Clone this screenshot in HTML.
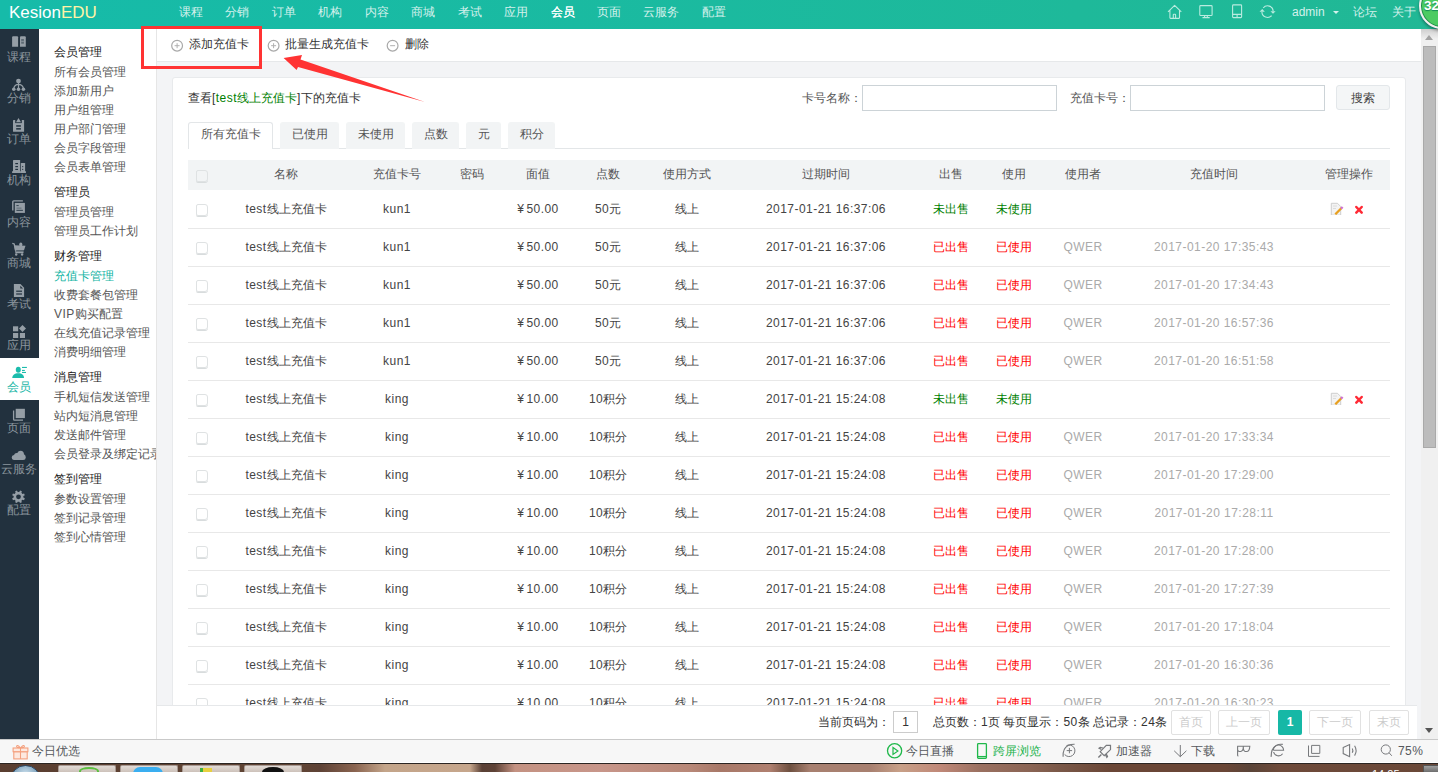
<!DOCTYPE html><html><head><meta charset="utf-8"><style>
*{margin:0;padding:0;box-sizing:border-box}
html,body{width:1438px;height:772px;overflow:hidden;background:#fff;font-family:"Liberation Sans",sans-serif;font-size:12px;color:#444;position:relative}
.a{position:absolute;white-space:nowrap}
.c{position:absolute;width:200px;text-align:center;white-space:nowrap;line-height:14px}
#top{left:0;top:0;width:1438px;height:29px;background:linear-gradient(90deg,#16bba9 0%,#1bba9f 50%,#21b895 100%)}
#logo{left:9px;top:3px;font-size:17px;color:#fff;line-height:20px}
#logo span{color:#fff3a6}
.nav{top:5px;color:#d4f1ec;font-size:12px;line-height:14px}
#side{left:0;top:29px;width:39px;height:710px;background:#22313e}
.si{position:absolute;left:0;width:39px;height:41px;text-align:center;color:#8b959d}
.si .lb{position:absolute;left:-10.7px;width:59px;text-align:center;top:20.5px;font-size:12px;line-height:14px}
.si svg{position:absolute;left:13px;top:7px}
.si.on{background:#fff;color:#17b6a6;margin-top:-1px;height:42px}
.si.on .lb{top:21.5px}
#sub{left:39px;top:29px;width:118px;height:710px;background:#fff;border-right:1px solid #e6e6e6;overflow:hidden}
.mh{position:absolute;left:15px;color:#222;font-size:12px;line-height:14px}
.mi{position:absolute;left:15px;color:#555;font-size:12px;line-height:14px}
#main{left:157px;top:29px;width:1264px;height:710px;background:#f3f4f6;overflow:hidden}
#tool{left:157px;top:29px;width:1264px;height:33px;background:#fff;border-bottom:1px solid #e6e8ea}
#panel{left:172px;top:77px;width:1234px;height:700px;background:#fff;border:1px solid #e8eaec;border-radius:3px}
.tab{position:absolute;top:122px;height:27px;background:#f2f4f5;border:1px solid #f2f4f5;border-bottom:none;border-radius:3px 3px 0 0;text-align:center;line-height:23px;color:#555}
.tab.on{background:#fff;border-color:#e3e6e8}
#tabline{left:188px;top:148px;width:1202px;height:1px;background:#e3e6e8}
#thead{left:188px;top:160px;width:1202px;height:30px;background:#f2f4f5}
.rl{position:absolute;left:188px;width:1202px;height:1px;background:#e8e8e8}
.cb{position:absolute;left:196px;width:12px;height:12px;border:1px solid #dfe2e3;border-radius:2px 3px 3px 2px;background:transparent;box-shadow:0 1px 0 #d8dcdd}
.l{letter-spacing:0.45px}.y{margin-right:2.5px}
.g{color:#008000}.r{color:#f00}.q{color:#aaa}
#pager{left:157px;top:705px;width:1260px;height:34px;background:#fff;border-top:1px solid #e6e8ea}
.pb{position:absolute;top:710px;height:25px;border:1px solid #e1e1e1;border-radius:2px;color:#ccc;text-align:center;line-height:23px;background:#fff}
#sbar{left:1421px;top:29px;width:17px;height:710px;background:#f0f0f0}
#status{left:0;top:739px;width:1438px;height:24px;background:#f7f7f7;border-top:1px solid #c9c9c9;border-bottom:1px solid #fff}
#task{left:0;top:763px;width:1438px;height:9px;border-top:1px solid #2b2522;background:linear-gradient(90deg,#5a3e30 0px,#604434 300px,#5e4236 320px,#8a6450 355px,#c4a58a 385px,#c6a68c 470px,#5a4035 482px,#5e4236 495px,#c49282 515px,#c8968a 600px,#b88878 690px,#a87868 720px,#b08070 770px,#6e5040 790px,#a88070 810px,#a88070 870px,#c8a088 900px,#c08878 940px,#9a7060 980px,#8a6454 1030px,#7a5848 1060px,#6a4636 1110px,#6a4636 1225px,#5a4438 1250px,#6e4a3a 1280px,#6a4838 1423px)}
.tb{position:absolute;top:765px;height:8px;border:1px solid #a89a93;border-bottom:none;border-radius:2px 2px 0 0;background:linear-gradient(#e2dbd6,#c9bdb5)}
</style></head><body>

<div id="top" class="a"></div>
<div id="logo" class="a">Kesion<span>EDU</span></div>
<div class="c nav" style="left:91px;color:#d4f1ec">课程</div>
<div class="c nav" style="left:137px;color:#d4f1ec">分销</div>
<div class="c nav" style="left:184px;color:#d4f1ec">订单</div>
<div class="c nav" style="left:230px;color:#d4f1ec">机构</div>
<div class="c nav" style="left:277px;color:#d4f1ec">内容</div>
<div class="c nav" style="left:323px;color:#d4f1ec">商城</div>
<div class="c nav" style="left:370px;color:#d4f1ec">考试</div>
<div class="c nav" style="left:416px;color:#d4f1ec">应用</div>
<div class="c nav" style="left:463px;color:#fff;text-shadow:0.4px 0 0 #fff">会员</div>
<div class="c nav" style="left:509px;color:#d4f1ec">页面</div>
<div class="c nav" style="left:561px;color:#d4f1ec">云服务</div>
<div class="c nav" style="left:614px;color:#d4f1ec">配置</div>
<svg class="a" style="left:1160px;top:0" width="125" height="24" viewBox="1160 0 125 24"><g stroke="#b9ebdf" stroke-width="1.1" fill="none" stroke-linejoin="round">
<path d="M1168,11.8 L1174.6,5.3 L1181.3,11.8 M1169.9,10.3 L1169.9,17.8 Q1169.9,18.4 1170.5,18.4 L1178.9,18.4 Q1179.5,18.4 1179.5,17.8 L1179.5,10.3 M1173.3,18.2 L1173.3,14.8 Q1173.3,14.3 1173.8,14.3 L1175.1,14.3 Q1175.6,14.3 1175.6,14.8 L1175.6,18.2"/>
<rect x="1199.8" y="5.6" width="12.3" height="9.9" rx="0.8"/>
<path d="M1202.5,17.6 L1209.7,17.6 M1204.6,15.5 L1204.6,17.5 M1207.3,15.5 L1207.3,17.5"/>
<rect x="1232.6" y="4.9" width="9" height="12.7" rx="0.8"/>
<path d="M1232.6,14.4 L1241.6,14.4 M1237.1,14.4 L1237.1,17.6"/>
<path d="M1263.2,8 A5.6,5.6 0 0 1 1273.2,11.3 M1271.6,15.6 A5.6,5.6 0 0 1 1261.9,12"/>
</g><g fill="#b9ebdf"><polygon points="1259.5,11.8 1262.3,9 1264.8,11.8"/><polygon points="1270.5,11.2 1275.6,11.2 1273,13.8"/></g></svg>
<div class="a nav" style="left:1292px">admin</div>
<div class="a" style="left:1333px;top:11px;width:0;height:0;border-left:3px solid transparent;border-right:3px solid transparent;border-top:3px solid #d4f1ec"></div>
<div class="a nav" style="left:1353px">论坛</div>
<div class="a nav" style="left:1392px">关于</div>
<div id="side" class="a"></div>
<div class="si" style="top:29.00px"><div class="lb">课程</div></div>
<div class="si" style="top:70.25px"><div class="lb">分销</div></div>
<div class="si" style="top:111.50px"><div class="lb">订单</div></div>
<div class="si" style="top:152.75px"><div class="lb">机构</div></div>
<div class="si" style="top:194.00px"><div class="lb">内容</div></div>
<div class="si" style="top:235.25px"><div class="lb">商城</div></div>
<div class="si" style="top:276.50px"><div class="lb">考试</div></div>
<div class="si" style="top:317.75px"><div class="lb">应用</div></div>
<div class="si on" style="top:359.00px"><div class="lb">会员</div></div>
<div class="si" style="top:400.25px"><div class="lb">页面</div></div>
<div class="si" style="top:441.50px"><div class="lb">云服务</div></div>
<div class="si" style="top:482.75px"><div class="lb">配置</div></div>
<svg class="a" style="left:0;top:0" width="39" height="540" viewBox="0 0 39 540">
<g fill="#959ea6">
<path d="M12.1,37.2 Q12.1,36.2 13.1,36.2 L17.1,36.2 Q18.1,36.2 18.1,37.2 L18.1,46.8 L12.1,46.8 Z"/>
<path d="M20,37.2 Q20,36.2 21,36.2 L24.8,36.2 Q25.8,36.2 25.8,37.2 L25.8,46.8 L20,46.8 Z"/>
<rect x="21.2" y="39" width="2.7" height="4.7" fill="#5d6a74"/><rect x="21.2" y="40.9" width="2.7" height="0.8" fill="#959ea6"/>
<circle cx="18.5" cy="81.1" r="2.4"/>
<circle cx="13.8" cy="89.3" r="1.8"/><circle cx="18.5" cy="89.3" r="1.8"/><circle cx="23.4" cy="89.3" r="1.8"/>
<path d="M18.5,83 L18.5,88 M13.8,88.3 Q14.5,84.5 18.5,84.3 Q22.6,84.5 23.4,88.3" stroke="#959ea6" stroke-width="1.2" fill="none"/>
<rect x="13" y="120" width="11.1" height="11.8" rx="0.6"/>
<rect x="15.2" y="119.5" width="6.6" height="3.6" fill="#22313e"/>
<polygon points="16,122.3 18.5,118 21,122.3"/>
<rect x="16.2" y="125.2" width="4.7" height="1.5" fill="#22313e"/><rect x="16.2" y="128.1" width="4.7" height="1.5" fill="#22313e"/>
<rect x="13" y="160" width="7.1" height="12.9" rx="0.5"/><rect x="20.8" y="163" width="4.3" height="9.9" rx="0.5"/><rect x="12" y="171.3" width="14" height="1.6"/>
<g fill="#22313e"><rect x="15.3" y="163" width="2.7" height="1.2"/><rect x="15.3" y="166" width="2.7" height="1.2"/><rect x="15.3" y="168.8" width="2.7" height="1.2"/><rect x="22.2" y="166" width="1" height="1.2"/><rect x="22.2" y="168.8" width="1" height="1.2"/></g>
<path d="M12.8,210.4 L12.8,201.8 Q12.8,200.9 13.7,200.9 L22.9,200.9" stroke="#959ea6" stroke-width="1.4" fill="none"/>
<rect x="14.2" y="202.3" width="11.3" height="11.2" fill="#22313e"/>
<rect x="14.8" y="202.9" width="10.1" height="10"/>
<g fill="#3d4c58"><rect x="16.4" y="205" width="2.3" height="1.1"/><rect x="16.5" y="207.5" width="5" height="1.3" fill="#6b7780"/><rect x="16.4" y="209.8" width="6.5" height="1.2"/></g>
<path d="M12.3,243.3 L14.2,244 L16,252.5 L23.5,252.5" stroke="#959ea6" stroke-width="1.3" fill="none"/>
<polygon points="14,245.2 25.5,245.8 24,250.2 15,250.2"/>
<ellipse cx="20.8" cy="244.5" rx="1.6" ry="2"/>
<rect x="15.5" y="250.5" width="8" height="1.5" fill="#6b7780"/>
<circle cx="16.2" cy="254.5" r="1.2"/><circle cx="22.1" cy="254.5" r="1.2"/>
<polygon points="13.9,284.1 20.5,284.1 24.1,287.8 24.1,297 13.9,297"/>
<polygon points="20.3,285.8 20.3,288.6 23,288.6" fill="#22313e"/>
<rect x="16.2" y="290.6" width="5.8" height="1.2" fill="#22313e"/><rect x="16.2" y="293.4" width="5.8" height="1.2" fill="#22313e"/>
<rect x="13" y="326.3" width="5.2" height="5"/><rect x="13" y="333" width="5.2" height="5"/><rect x="19.9" y="333" width="5.1" height="5"/>
<polygon points="22.5,325 26,328.5 22.5,332 19,328.5"/>
<g fill="#1cbcac">
<ellipse cx="18.3" cy="369.8" rx="2.5" ry="3"/>
<path d="M12.2,377.9 C12.4,375 14.5,373.8 16.8,373.2 L19.8,373.2 C22,373.8 24,375 24.1,377.9 Z"/>
<rect x="22" y="366.9" width="4.9" height="1.1"/><rect x="22" y="369.9" width="2.8" height="1.1"/><rect x="22" y="371.9" width="4" height="1.1"/>
</g>
<rect x="15.7" y="408.8" width="9.2" height="9.3"/>
<path d="M13.6,410.5 L13.6,419.3 Q13.6,420.2 14.5,420.2 L23,420.2" stroke="#959ea6" stroke-width="1.3" fill="none"/>
<path d="M13.8,460 Q11.7,460 11.7,457.6 Q11.7,455.2 14,455 Q14.8,452.6 17.3,453 Q18.3,450.7 20.6,450.7 Q23.8,450.9 24,454.3 Q25.8,455.2 25.8,457.4 Q25.6,460 23.2,460 Z"/>
<polygon points="19.25,491.96 20.06,490.49 21.86,491.23 21.40,492.85 22.45,493.90 24.07,493.44 24.81,495.24 23.34,496.05 23.34,497.55 24.81,498.36 24.07,500.16 22.45,499.70 21.40,500.75 21.86,502.37 20.06,503.11 19.25,501.64 17.75,501.64 16.94,503.11 15.14,502.37 15.60,500.75 14.55,499.70 12.93,500.16 12.19,498.36 13.66,497.55 13.66,496.05 12.19,495.24 12.93,493.44 14.55,493.90 15.60,492.85 15.14,491.23 16.94,490.49 17.75,491.96"/>
<circle cx="18.5" cy="496.8" r="2.4" fill="#22313e"/>
</g></svg>
<div id="sub" class="a">
<div class="mh" style="top:16px;">会员管理</div>
<div class="mi" style="top:36px;">所有会员管理</div>
<div class="mi" style="top:55px;">添加新用户</div>
<div class="mi" style="top:74px;">用户组管理</div>
<div class="mi" style="top:93px;">用户部门管理</div>
<div class="mi" style="top:112px;">会员字段管理</div>
<div class="mi" style="top:131px;">会员表单管理</div>
<div class="mh" style="top:156px;">管理员</div>
<div class="mi" style="top:176px;">管理员管理</div>
<div class="mi" style="top:195px;">管理员工作计划</div>
<div class="mh" style="top:220px;">财务管理</div>
<div class="mi" style="top:240px;color:#12b4a4;">充值卡管理</div>
<div class="mi" style="top:259px;">收费套餐包管理</div>
<div class="mi" style="top:278px;"><span class="l">VIP</span>购买配置</div>
<div class="mi" style="top:297px;">在线充值记录管理</div>
<div class="mi" style="top:316px;">消费明细管理</div>
<div class="mh" style="top:341px;">消息管理</div>
<div class="mi" style="top:361px;">手机短信发送管理</div>
<div class="mi" style="top:380px;">站内短消息管理</div>
<div class="mi" style="top:399px;">发送邮件管理</div>
<div class="mi" style="top:418px;">会员登录及绑定记录</div>
<div class="mh" style="top:443px;">签到管理</div>
<div class="mi" style="top:463px;">参数设置管理</div>
<div class="mi" style="top:482px;">签到记录管理</div>
<div class="mi" style="top:501px;">签到心情管理</div>
</div>
<div id="main" class="a"></div>
<div id="tool" class="a"></div>
<div id="panel" class="a"></div>
<div class="a" style="left:188px;top:90px;color:#333">查看<span class="l">[</span><span style="color:#008000"><span class="l">test</span>线上充值卡</span><span class="l">]</span>下的充值卡</div>
<svg class="a" style="left:160px;top:30px" width="250" height="30" viewBox="160 30 250 30"><g fill="none" stroke="#a9a9a9" stroke-width="1.2">
<circle cx="177.1" cy="45.7" r="5.4"/><circle cx="273.6" cy="45.7" r="5.4"/><circle cx="392.6" cy="45.7" r="5.4"/></g>
<g stroke="#b0b0b0" stroke-width="1"><path d="M174.6,45.7 L179.6,45.7 M177.1,43.2 L177.1,48.2 M271.1,45.7 L276.1,45.7 M273.6,43.2 L273.6,48.2 M390.1,45.7 L395.1,45.7"/></g></svg>
<div class="a" style="left:189px;top:36px;color:#333">添加充值卡</div>
<div class="a" style="left:285px;top:36px;color:#333">批量生成充值卡</div>
<div class="a" style="left:405px;top:36px;color:#333">删除</div>
<div class="a" style="left:802px;top:90px;color:#555">卡号名称：</div>
<div class="a" style="left:862px;top:85px;width:195px;height:26px;border:1px solid #ccd3d7;background:#fff"></div>
<div class="a" style="left:1070px;top:90px;color:#555">充值卡号：</div>
<div class="a" style="left:1130px;top:85px;width:195px;height:26px;border:1px solid #ccd3d7;background:#fff"></div>
<div class="a" style="left:1336px;top:85px;width:54px;height:25px;border:1px solid #e3e7ea;background:#f4f6f7;border-radius:3px;text-align:center;line-height:25px;color:#444">搜索</div>
<div id="tabline" class="a"></div>
<div class="tab on" style="left:188px;width:85px">所有充值卡</div>
<div class="tab" style="left:280px;width:59px">已使用</div>
<div class="tab" style="left:346px;width:59px">未使用</div>
<div class="tab" style="left:412px;width:47px">点数</div>
<div class="tab" style="left:466px;width:35px">元</div>
<div class="tab" style="left:508px;width:47px">积分</div>
<div id="thead" class="a"></div>
<div class="cb" style="top:170px"></div>
<div class="c " style="left:186px;top:167px;color:#555">名称</div>
<div class="c " style="left:297px;top:167px;color:#555">充值卡号</div>
<div class="c " style="left:372px;top:167px;color:#555">密码</div>
<div class="c " style="left:438px;top:167px;color:#555">面值</div>
<div class="c " style="left:508px;top:167px;color:#555">点数</div>
<div class="c " style="left:587px;top:167px;color:#555">使用方式</div>
<div class="c " style="left:726px;top:167px;color:#555">过期时间</div>
<div class="c " style="left:851px;top:167px;color:#555">出售</div>
<div class="c " style="left:914px;top:167px;color:#555">使用</div>
<div class="c " style="left:983px;top:167px;color:#555">使用者</div>
<div class="c " style="left:1114px;top:167px;color:#555">充值时间</div>
<div class="c " style="left:1249px;top:167px;color:#555">管理操作</div>
<div class="cb" style="top:204px"></div>
<div class="c " style="left:186px;top:202px;"><span class="l">test</span>线上充值卡</div>
<div class="c " style="left:297px;top:202px;"><span class="l">kun1</span></div>
<div class="c " style="left:438px;top:202px;"><span class="y">¥</span><span class="l">50.00</span></div>
<div class="c " style="left:508px;top:202px;"><span class="l">50</span>元</div>
<div class="c " style="left:587px;top:202px;">线上</div>
<div class="c " style="left:726px;top:202px;"><span class="l">2017-01-21 16:37:06</span></div>
<div class="c g" style="left:851px;top:202px;">未出售</div>
<div class="c g" style="left:914px;top:202px;">未使用</div>
<svg class="a" style="left:1328px;top:199px" width="40" height="16" viewBox="0 0 40 16">
<path d="M3.3,4.3 L9.5,4.3 L12.7,7.5 L12.7,16.2 L3.3,16.2 Z" fill="#f3f3f3" stroke="#c9c9c9" stroke-width="0.9"/>
<path d="M5,7 L9,7 M5,9.5 L8,9.5" stroke="#d5d5d5" stroke-width="0.8"/>
<path d="M7.3,15.3 L13.3,9.3" stroke="#e8a020" stroke-width="2.3"/>
<path d="M13,9.6 L14.6,8" stroke="#d070d0" stroke-width="2.3"/>
<path d="M28.3,8 L33.7,13.6 M33.7,8 L28.3,13.6" stroke="#ff2a35" stroke-width="2.5" stroke-linecap="round"/>
</svg>
<div class="rl" style="top:228px"></div>
<div class="cb" style="top:242px"></div>
<div class="c " style="left:186px;top:240px;"><span class="l">test</span>线上充值卡</div>
<div class="c " style="left:297px;top:240px;"><span class="l">kun1</span></div>
<div class="c " style="left:438px;top:240px;"><span class="y">¥</span><span class="l">50.00</span></div>
<div class="c " style="left:508px;top:240px;"><span class="l">50</span>元</div>
<div class="c " style="left:587px;top:240px;">线上</div>
<div class="c " style="left:726px;top:240px;"><span class="l">2017-01-21 16:37:06</span></div>
<div class="c r" style="left:851px;top:240px;">已出售</div>
<div class="c r" style="left:914px;top:240px;">已使用</div>
<div class="c q" style="left:983px;top:240px;"><span class="l">QWER</span></div>
<div class="c q" style="left:1114px;top:240px;"><span class="l">2017-01-20 17:35:43</span></div>
<div class="rl" style="top:266px"></div>
<div class="cb" style="top:280px"></div>
<div class="c " style="left:186px;top:278px;"><span class="l">test</span>线上充值卡</div>
<div class="c " style="left:297px;top:278px;"><span class="l">kun1</span></div>
<div class="c " style="left:438px;top:278px;"><span class="y">¥</span><span class="l">50.00</span></div>
<div class="c " style="left:508px;top:278px;"><span class="l">50</span>元</div>
<div class="c " style="left:587px;top:278px;">线上</div>
<div class="c " style="left:726px;top:278px;"><span class="l">2017-01-21 16:37:06</span></div>
<div class="c r" style="left:851px;top:278px;">已出售</div>
<div class="c r" style="left:914px;top:278px;">已使用</div>
<div class="c q" style="left:983px;top:278px;"><span class="l">QWER</span></div>
<div class="c q" style="left:1114px;top:278px;"><span class="l">2017-01-20 17:34:43</span></div>
<div class="rl" style="top:304px"></div>
<div class="cb" style="top:318px"></div>
<div class="c " style="left:186px;top:316px;"><span class="l">test</span>线上充值卡</div>
<div class="c " style="left:297px;top:316px;"><span class="l">kun1</span></div>
<div class="c " style="left:438px;top:316px;"><span class="y">¥</span><span class="l">50.00</span></div>
<div class="c " style="left:508px;top:316px;"><span class="l">50</span>元</div>
<div class="c " style="left:587px;top:316px;">线上</div>
<div class="c " style="left:726px;top:316px;"><span class="l">2017-01-21 16:37:06</span></div>
<div class="c r" style="left:851px;top:316px;">已出售</div>
<div class="c r" style="left:914px;top:316px;">已使用</div>
<div class="c q" style="left:983px;top:316px;"><span class="l">QWER</span></div>
<div class="c q" style="left:1114px;top:316px;"><span class="l">2017-01-20 16:57:36</span></div>
<div class="rl" style="top:342px"></div>
<div class="cb" style="top:356px"></div>
<div class="c " style="left:186px;top:354px;"><span class="l">test</span>线上充值卡</div>
<div class="c " style="left:297px;top:354px;"><span class="l">kun1</span></div>
<div class="c " style="left:438px;top:354px;"><span class="y">¥</span><span class="l">50.00</span></div>
<div class="c " style="left:508px;top:354px;"><span class="l">50</span>元</div>
<div class="c " style="left:587px;top:354px;">线上</div>
<div class="c " style="left:726px;top:354px;"><span class="l">2017-01-21 16:37:06</span></div>
<div class="c r" style="left:851px;top:354px;">已出售</div>
<div class="c r" style="left:914px;top:354px;">已使用</div>
<div class="c q" style="left:983px;top:354px;"><span class="l">QWER</span></div>
<div class="c q" style="left:1114px;top:354px;"><span class="l">2017-01-20 16:51:58</span></div>
<div class="rl" style="top:380px"></div>
<div class="cb" style="top:394px"></div>
<div class="c " style="left:186px;top:392px;"><span class="l">test</span>线上充值卡</div>
<div class="c " style="left:297px;top:392px;"><span class="l">king</span></div>
<div class="c " style="left:438px;top:392px;"><span class="y">¥</span><span class="l">10.00</span></div>
<div class="c " style="left:508px;top:392px;"><span class="l">10</span>积分</div>
<div class="c " style="left:587px;top:392px;">线上</div>
<div class="c " style="left:726px;top:392px;"><span class="l">2017-01-21 15:24:08</span></div>
<div class="c g" style="left:851px;top:392px;">未出售</div>
<div class="c g" style="left:914px;top:392px;">未使用</div>
<svg class="a" style="left:1328px;top:389px" width="40" height="16" viewBox="0 0 40 16">
<path d="M3.3,4.3 L9.5,4.3 L12.7,7.5 L12.7,16.2 L3.3,16.2 Z" fill="#f3f3f3" stroke="#c9c9c9" stroke-width="0.9"/>
<path d="M5,7 L9,7 M5,9.5 L8,9.5" stroke="#d5d5d5" stroke-width="0.8"/>
<path d="M7.3,15.3 L13.3,9.3" stroke="#e8a020" stroke-width="2.3"/>
<path d="M13,9.6 L14.6,8" stroke="#d070d0" stroke-width="2.3"/>
<path d="M28.3,8 L33.7,13.6 M33.7,8 L28.3,13.6" stroke="#ff2a35" stroke-width="2.5" stroke-linecap="round"/>
</svg>
<div class="rl" style="top:418px"></div>
<div class="cb" style="top:432px"></div>
<div class="c " style="left:186px;top:430px;"><span class="l">test</span>线上充值卡</div>
<div class="c " style="left:297px;top:430px;"><span class="l">king</span></div>
<div class="c " style="left:438px;top:430px;"><span class="y">¥</span><span class="l">10.00</span></div>
<div class="c " style="left:508px;top:430px;"><span class="l">10</span>积分</div>
<div class="c " style="left:587px;top:430px;">线上</div>
<div class="c " style="left:726px;top:430px;"><span class="l">2017-01-21 15:24:08</span></div>
<div class="c r" style="left:851px;top:430px;">已出售</div>
<div class="c r" style="left:914px;top:430px;">已使用</div>
<div class="c q" style="left:983px;top:430px;"><span class="l">QWER</span></div>
<div class="c q" style="left:1114px;top:430px;"><span class="l">2017-01-20 17:33:34</span></div>
<div class="rl" style="top:456px"></div>
<div class="cb" style="top:470px"></div>
<div class="c " style="left:186px;top:468px;"><span class="l">test</span>线上充值卡</div>
<div class="c " style="left:297px;top:468px;"><span class="l">king</span></div>
<div class="c " style="left:438px;top:468px;"><span class="y">¥</span><span class="l">10.00</span></div>
<div class="c " style="left:508px;top:468px;"><span class="l">10</span>积分</div>
<div class="c " style="left:587px;top:468px;">线上</div>
<div class="c " style="left:726px;top:468px;"><span class="l">2017-01-21 15:24:08</span></div>
<div class="c r" style="left:851px;top:468px;">已出售</div>
<div class="c r" style="left:914px;top:468px;">已使用</div>
<div class="c q" style="left:983px;top:468px;"><span class="l">QWER</span></div>
<div class="c q" style="left:1114px;top:468px;"><span class="l">2017-01-20 17:29:00</span></div>
<div class="rl" style="top:494px"></div>
<div class="cb" style="top:508px"></div>
<div class="c " style="left:186px;top:506px;"><span class="l">test</span>线上充值卡</div>
<div class="c " style="left:297px;top:506px;"><span class="l">king</span></div>
<div class="c " style="left:438px;top:506px;"><span class="y">¥</span><span class="l">10.00</span></div>
<div class="c " style="left:508px;top:506px;"><span class="l">10</span>积分</div>
<div class="c " style="left:587px;top:506px;">线上</div>
<div class="c " style="left:726px;top:506px;"><span class="l">2017-01-21 15:24:08</span></div>
<div class="c r" style="left:851px;top:506px;">已出售</div>
<div class="c r" style="left:914px;top:506px;">已使用</div>
<div class="c q" style="left:983px;top:506px;"><span class="l">QWER</span></div>
<div class="c q" style="left:1114px;top:506px;"><span class="l">2017-01-20 17:28:11</span></div>
<div class="rl" style="top:532px"></div>
<div class="cb" style="top:546px"></div>
<div class="c " style="left:186px;top:544px;"><span class="l">test</span>线上充值卡</div>
<div class="c " style="left:297px;top:544px;"><span class="l">king</span></div>
<div class="c " style="left:438px;top:544px;"><span class="y">¥</span><span class="l">10.00</span></div>
<div class="c " style="left:508px;top:544px;"><span class="l">10</span>积分</div>
<div class="c " style="left:587px;top:544px;">线上</div>
<div class="c " style="left:726px;top:544px;"><span class="l">2017-01-21 15:24:08</span></div>
<div class="c r" style="left:851px;top:544px;">已出售</div>
<div class="c r" style="left:914px;top:544px;">已使用</div>
<div class="c q" style="left:983px;top:544px;"><span class="l">QWER</span></div>
<div class="c q" style="left:1114px;top:544px;"><span class="l">2017-01-20 17:28:00</span></div>
<div class="rl" style="top:570px"></div>
<div class="cb" style="top:584px"></div>
<div class="c " style="left:186px;top:582px;"><span class="l">test</span>线上充值卡</div>
<div class="c " style="left:297px;top:582px;"><span class="l">king</span></div>
<div class="c " style="left:438px;top:582px;"><span class="y">¥</span><span class="l">10.00</span></div>
<div class="c " style="left:508px;top:582px;"><span class="l">10</span>积分</div>
<div class="c " style="left:587px;top:582px;">线上</div>
<div class="c " style="left:726px;top:582px;"><span class="l">2017-01-21 15:24:08</span></div>
<div class="c r" style="left:851px;top:582px;">已出售</div>
<div class="c r" style="left:914px;top:582px;">已使用</div>
<div class="c q" style="left:983px;top:582px;"><span class="l">QWER</span></div>
<div class="c q" style="left:1114px;top:582px;"><span class="l">2017-01-20 17:27:39</span></div>
<div class="rl" style="top:608px"></div>
<div class="cb" style="top:622px"></div>
<div class="c " style="left:186px;top:620px;"><span class="l">test</span>线上充值卡</div>
<div class="c " style="left:297px;top:620px;"><span class="l">king</span></div>
<div class="c " style="left:438px;top:620px;"><span class="y">¥</span><span class="l">10.00</span></div>
<div class="c " style="left:508px;top:620px;"><span class="l">10</span>积分</div>
<div class="c " style="left:587px;top:620px;">线上</div>
<div class="c " style="left:726px;top:620px;"><span class="l">2017-01-21 15:24:08</span></div>
<div class="c r" style="left:851px;top:620px;">已出售</div>
<div class="c r" style="left:914px;top:620px;">已使用</div>
<div class="c q" style="left:983px;top:620px;"><span class="l">QWER</span></div>
<div class="c q" style="left:1114px;top:620px;"><span class="l">2017-01-20 17:18:04</span></div>
<div class="rl" style="top:646px"></div>
<div class="cb" style="top:660px"></div>
<div class="c " style="left:186px;top:658px;"><span class="l">test</span>线上充值卡</div>
<div class="c " style="left:297px;top:658px;"><span class="l">king</span></div>
<div class="c " style="left:438px;top:658px;"><span class="y">¥</span><span class="l">10.00</span></div>
<div class="c " style="left:508px;top:658px;"><span class="l">10</span>积分</div>
<div class="c " style="left:587px;top:658px;">线上</div>
<div class="c " style="left:726px;top:658px;"><span class="l">2017-01-21 15:24:08</span></div>
<div class="c r" style="left:851px;top:658px;">已出售</div>
<div class="c r" style="left:914px;top:658px;">已使用</div>
<div class="c q" style="left:983px;top:658px;"><span class="l">QWER</span></div>
<div class="c q" style="left:1114px;top:658px;"><span class="l">2017-01-20 16:30:36</span></div>
<div class="rl" style="top:684px"></div>
<div class="cb" style="top:698px"></div>
<div class="c " style="left:186px;top:696px;"><span class="l">test</span>线上充值卡</div>
<div class="c " style="left:297px;top:696px;"><span class="l">king</span></div>
<div class="c " style="left:438px;top:696px;"><span class="y">¥</span><span class="l">10.00</span></div>
<div class="c " style="left:508px;top:696px;"><span class="l">10</span>积分</div>
<div class="c " style="left:587px;top:696px;">线上</div>
<div class="c " style="left:726px;top:696px;"><span class="l">2017-01-21 15:24:08</span></div>
<div class="c r" style="left:851px;top:696px;">已出售</div>
<div class="c r" style="left:914px;top:696px;">已使用</div>
<div class="c q" style="left:983px;top:696px;"><span class="l">QWER</span></div>
<div class="c q" style="left:1114px;top:696px;"><span class="l">2017-01-20 16:30:23</span></div>
<div class="rl" style="top:722px"></div>
<div id="pager" class="a"></div>
<div class="a" style="left:818px;top:714px;color:#333">当前页码为：</div>
<div class="a" style="left:893px;top:711px;width:25px;height:22px;border:1px solid #ccc;text-align:center;line-height:20px;color:#333">1</div>
<div class="a" style="left:933px;top:714px;color:#333">总页数：<span class="l">1</span>页 每页显示：<span class="l">50</span>条 总记录：<span class="l">24</span>条</div>
<div class="pb" style="left:1171px;width:40px">首页</div>
<div class="pb" style="left:1218px;width:52px">上一页</div>
<div class="pb" style="left:1309px;width:52px">下一页</div>
<div class="pb" style="left:1369px;width:40px">末页</div>
<div class="a" style="left:1278px;top:710px;width:24px;height:25px;background:#16b8a6;border-radius:2px;color:#fff;text-align:center;line-height:25px;font-weight:bold">1</div>
<div id="sbar" class="a"></div>
<div class="a" style="left:1421px;top:29px;width:17px;height:10px;background:linear-gradient(#cfcfcf,#f0f0f0)"></div>
<div class="a" style="left:1423px;top:46px;width:13px;height:402px;background:#bcbcbc;border:1px solid #a9a9a9"></div>
<div class="a" style="left:1425px;top:35px;width:0;height:0;border-left:4.5px solid transparent;border-right:4.5px solid transparent;border-bottom:5px solid #a3a3a3"></div>
<div class="a" style="left:1425px;top:728px;width:0;height:0;border-left:4.5px solid transparent;border-right:4.5px solid transparent;border-top:5px solid #555"></div>
<div class="a" style="left:1419px;top:-17px;width:46px;height:46px;border-radius:50%;background:#4ccb62;border:2px solid #f3eef0;box-shadow:inset 0 0 0 1px #1d8a4c,0 2px 3px rgba(0,0,0,0.35)"></div>
<div class="a" style="left:1424px;top:-1.5px;color:#fff;font-weight:bold;font-size:13.5px;line-height:14px;text-shadow:0 1px 1px #185">32</div>
<div id="status" class="a"></div>
<div class="a" style="left:32px;top:744px;color:#55585c;line-height:14px">今日优选</div>
<div class="a" style="left:906px;top:744px;color:#55585c;line-height:14px">今日直播</div>
<div class="a" style="left:993px;top:744px;color:#22b34c;line-height:14px">跨屏浏览</div>
<div class="a" style="left:1116px;top:744px;color:#55585c;line-height:14px">加速器</div>
<div class="a" style="left:1191px;top:744px;color:#55585c;line-height:14px">下载</div>
<div class="a" style="left:1398px;top:744px;color:#55585c;line-height:14px"><span class="l">75%</span></div>
<svg class="a" style="left:0;top:739px" width="1438" height="24" viewBox="0 739 1438 24">
<g stroke="#f4a07e" stroke-width="1.1" fill="#fde9e0">
<rect x="13.8" y="751.7" width="13.4" height="7.2"/><rect x="13.1" y="748" width="14.8" height="3.7"/>
<path d="M20.5,748 L20.5,758.9" fill="none"/>
<path d="M20.3,747.8 Q17,744 16.6,746.6 Q17,747.8 20.3,747.8 M20.7,747.8 Q24,744 24.4,746.6 Q24,747.8 20.7,747.8" fill="none"/>
</g>
<g stroke="#1fb84a" stroke-width="1.3" fill="none">
<circle cx="894.6" cy="750.8" r="7.1"/>
<rect x="977.6" y="743.7" width="8.8" height="14.6" rx="0.8"/>
<path d="M977.6,756.6 L986.4,756.6"/>
</g>
<polygon points="893,747.4 897.9,750.9 893,754.4" fill="none" stroke="#1fb84a" stroke-width="1.2"/>
<g stroke="#77797c" stroke-width="1" fill="none">
<path d="M1066.5,745.6 A5.8,5.8 0 1 1 1064.6,754.4"/>
<path d="M1066.7,750.6 L1072.1,750.6 M1069.4,747.9 L1069.4,753.3"/>
<path d="M1063.1,756.8 Q1062.6,748.5 1068,745.6 Q1071,744.1 1074.6,744.2" stroke-width="1.1"/>
<path d="M1106.3,745.4 L1110.5,745.4 L1110.5,749.6 L1104.2,755.7 L1100.2,751.7 Z" stroke-width="1.2"/>
<path d="M1101.3,749.4 L1099,748.2 L1100.2,747.4 L1103,748" stroke-width="1.1"/>
<path d="M1106.2,753.8 L1107.6,756.4 L1106.8,757.4 L1105.3,754.6" stroke-width="1.1"/>
<path d="M1098.4,757.6 L1101.4,754.6" stroke-width="1.4"/>
<path d="M1180.3,745 L1180.3,756.7 M1174.2,750.8 L1180.3,756.7 L1186.4,750.8"/>
<path d="M1237.6,746.2 L1237.6,755.3 Q1237.6,756 1238.4,756 M1237.2,746.2 L1249.8,746.2 Q1249.6,751.5 1246.6,751.5 L1245.2,751.5 Q1243.3,751.5 1243.3,746.6 Q1243.3,751.5 1240.6,751.5 L1239.4,751.5 Q1237.8,751.5 1237.6,749.6" stroke-width="1.1"/>
<path d="M1273.3,750.2 L1283.6,750.2 A5.15,5.15 0 0 0 1273.3,750.2 M1273.6,752 A5,5 0 0 0 1282.6,753.7" stroke-width="1.1"/>
<path d="M1271.2,756.9 Q1270.8,748.5 1276.2,745.4 Q1279.3,743.8 1282.8,744.4" stroke-width="1.1"/>
<path d="M1308.5,745.5 L1308.5,756.4 L1319.5,756.4 M1311.6,745.4 L1319.8,745.4 L1319.8,753.4 L1311.6,753.4 Z"/>
<path d="M1343.2,747.6 L1349.6,744.6 L1349.6,756.7 L1343.2,753.6 Z M1352.3,748.6 Q1353.4,750.7 1352.3,752.8 M1354.6,745.8 Q1357.6,750.7 1354.6,755.6" stroke-width="1.1"/>
<circle cx="1385.8" cy="749.5" r="4.6"/><path d="M1389.1,752.8 L1391.8,755.8"/>
</g>
</svg>
<div id="task" class="a"></div>
<div class="tb" style="left:58px;width:58px"></div>
<div class="tb" style="left:120px;width:58px"></div>
<div class="tb" style="left:182px;width:58px"></div>
<div class="tb" style="left:244px;width:58px"></div>
<div class="a" style="left:10px;top:765px;width:31px;height:31px;border-radius:50%;background:radial-gradient(circle at 50% 30%,#cfe3f0,#6f95b0 60%,#3a5a78);border:1px solid #2d4a66"></div>
<div class="a" style="left:79px;top:767px;width:20px;height:8px;border-radius:50% 50% 0 0;border:2px solid #5cc040;border-bottom:none"></div>
<div class="a" style="left:133px;top:767px;width:30px;height:8px;border-radius:7px 7px 0 0;background:#3aaef0"></div>
<div class="a" style="left:200px;top:768px;width:12px;height:6px;background:#e8d040;border-left:3px solid #40b040"></div>
<div class="a" style="left:262px;top:767px;width:22px;height:10px;border-radius:50%;background:#111"></div>
<div class="a" style="left:1423px;top:765px;width:16px;height:8px;background:linear-gradient(#a0a0a0,#6e6e6e);border:1px solid #555"></div>
<div class="a" style="left:1372px;top:768px;color:#fff;font-size:11px;line-height:12px">14:05</div>
<div class="a" style="left:141px;top:26px;width:121px;height:43px;border:3px solid #f33"></div>
<svg class="a" style="left:0;top:0" width="1438" height="772"><polygon points="283.6,58 302,55 300.5,59.5 425,102 298,67 296.6,70" fill="#f33"/></svg>
</body></html>
